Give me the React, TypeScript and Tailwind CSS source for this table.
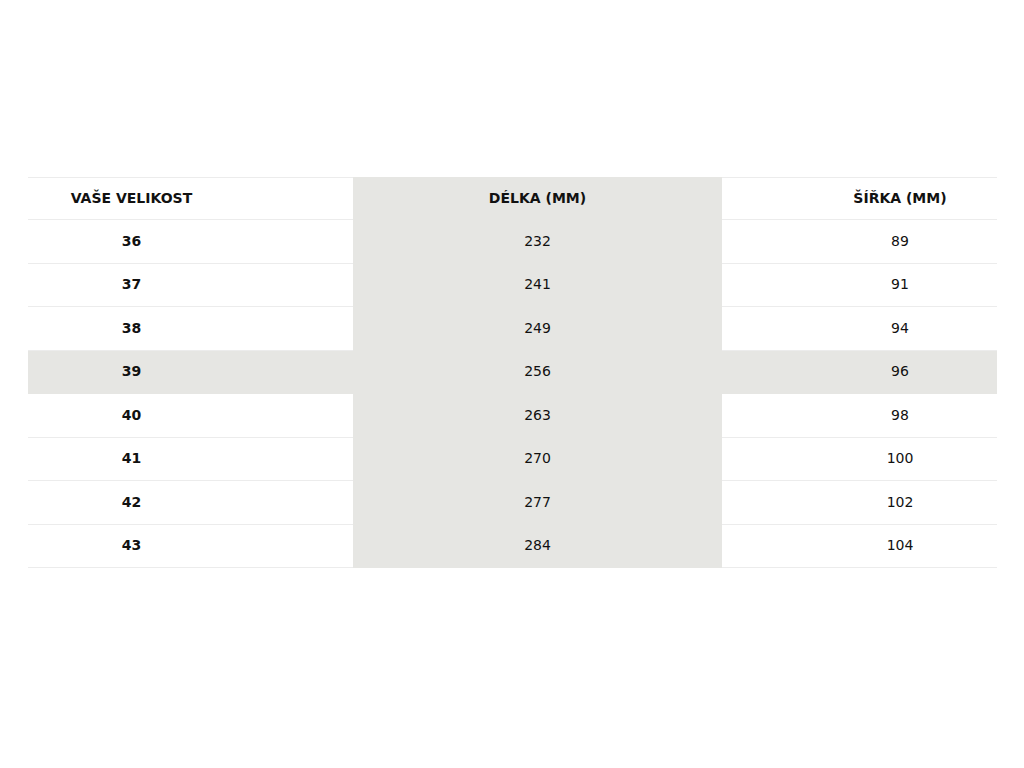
const rows = [
  ["36", "232", "89"],
  ["37", "241", "91"],
  ["38", "249", "94"],
  ["39", "256", "96"],
  ["40", "263", "98"],
  ["41", "270", "100"],
  ["42", "277", "102"],
  ["43", "284", "104"],
];

/** Shoe size chart: EU size, foot length and width in mm. */
export default function App() {
  return (
    <div className="min-h-[768px] bg-white pt-[177px] px-[28px] font-['DejaVu_Sans',Verdana,sans-serif] text-[14px] text-[#111]">
      <div className="w-[969px]">
        <div className="flex h-[43px] items-center">
          <div className="w-[325px] h-full flex items-center justify-center pr-[118px] border-y border-[#ececec] font-bold">
            VAŠE VELIKOST
          </div>
          <div className="w-[369px] h-full flex items-center justify-center bg-[#e6e6e3] border-y border-transparent font-bold">
            DÉLKA (MM)
          </div>
          <div className="w-[275px] h-full flex items-center justify-center pl-[81px] border-y border-[#ececec] font-bold">
            ŠÍŘKA (MM)
          </div>
        </div>
        {rows.map(([size, len, width]) => {
          const hl = size === "39";
          return (
            <div
              key={size}
              className={`flex h-[43.5px] items-center ${hl ? "bg-[#e6e6e3]" : ""}`}
            >
              <div
                className={`w-[325px] h-full flex items-center justify-center pr-[118px] font-bold border-b ${
                  hl ? "border-transparent" : "border-[#ececec]"
                }`}
              >
                {size}
              </div>
              <div className="w-[369px] h-full flex items-center justify-center bg-[#e6e6e3] border-b border-transparent">
                {len}
              </div>
              <div
                className={`w-[275px] h-full flex items-center justify-center pl-[81px] border-b ${
                  hl ? "border-transparent" : "border-[#ececec]"
                }`}
              >
                {width}
              </div>
            </div>
          );
        })}
      </div>
    </div>
  );
}
